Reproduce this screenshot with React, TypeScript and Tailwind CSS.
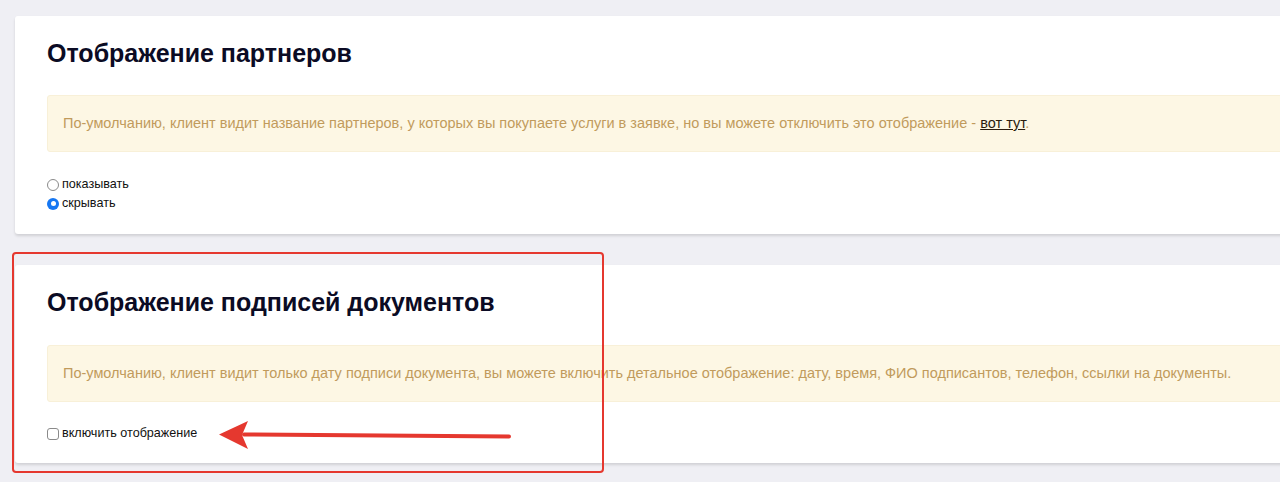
import React from 'react';

const font = { fontFamily: '"Liberation Sans", Arial, Helvetica, sans-serif' };

function Radio({ checked, label }: { checked?: boolean; label: string }) {
  return (
    <label className="flex items-center h-[19px] text-[12.6px] text-[#111] leading-[19px]">
      {checked ? (
        <span className="w-[12px] h-[12px] rounded-full bg-[#1677f2] flex items-center justify-center mr-[3px]">
          <span className="w-[5px] h-[5px] rounded-full bg-white" />
        </span>
      ) : (
        <span className="w-[12px] h-[12px] rounded-full border border-[#8a8a8a] bg-white mr-[3px]" />
      )}
      {label}
    </label>
  );
}

export default function App() {
  return (
    <div className="relative min-h-[482px] bg-[#efeff4] overflow-hidden pt-[16px]" style={font}>
      {/* Partners card */}
      <div className="ml-[15px] mr-[-30px] bg-white rounded-[3px] shadow-[0_2px_3px_rgba(0,0,0,0.13)] pl-[32px] pt-[21px] pb-[21px]">
        <h2 className="text-[25px] leading-[32px] font-bold text-[#0b0b24] mb-[26px]">Отображение партнеров</h2>
        <div className="bg-[#fdf7e4] border border-[#f8f0d8] rounded-[3px] pl-[15px] py-[18px] text-[14.5px] leading-[19px] text-[#c19b5c]">
          По-умолчанию, клиент видит название партнеров, у которых вы покупаете услуги в заявке, но вы можете отключить это отображение -{' '}
          <a className="text-[#2b1d0e] underline">вот тут</a>.
        </div>
        <div className="mt-[23px] flex flex-col">
          <Radio label="показывать" />
          <Radio checked label="скрывать" />
        </div>
      </div>

      {/* Signatures card */}
      <div className="mt-[31px] ml-[15px] mr-[-30px] bg-white rounded-[3px] shadow-[0_2px_3px_rgba(0,0,0,0.13)] pl-[32px] pt-[21px] pb-[20px]">
        <h2 className="text-[25px] leading-[32px] font-bold text-[#0b0b24] mb-[27px]">Отображение подписей документов</h2>
        <div className="bg-[#fdf7e4] border border-[#f8f0d8] rounded-[3px] pl-[15px] py-[18px] text-[14.5px] leading-[19px] text-[#c19b5c]">
          По-умолчанию, клиент видит только дату подписи документа, вы можете включить детальное отображение: дату, время, ФИО подписантов, телефон, ссылки на документы.
        </div>
        <label className="mt-[22px] flex items-center h-[19px] text-[12.6px] text-[#111] leading-[19px]">
          <span className="w-[12px] h-[12px] rounded-[3px] border border-[#8a8a8a] bg-white mr-[3px]" />
          включить отображение
        </label>
      </div>

      {/* Annotation overlay */}
      <div className="absolute left-[12px] top-[252px] w-[592px] h-[221px] border-[2.5px] border-[#e5382f] rounded-[4px] pointer-events-none" />
      <svg className="absolute left-0 top-0 pointer-events-none" width="1280" height="482">
        <line x1="244" y1="434.5" x2="509" y2="436.5" stroke="#e5382f" strokeWidth="4" strokeLinecap="round" />
        <polygon points="219,434.5 248,421 242,435 248,449" fill="#e5382f" />
      </svg>
    </div>
  );
}
